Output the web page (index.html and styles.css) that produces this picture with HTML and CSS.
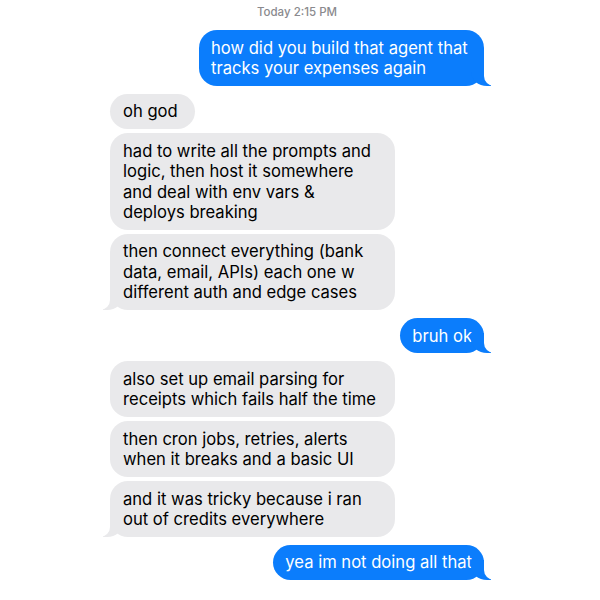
FILE: index.html
```html
<!DOCTYPE html>
<html>
<head>
<meta charset="utf-8">
<link rel="stylesheet" href="styles.css">
</head>
<body>
<div class="chat">
  <div class="stamp">Today 2:15 PM</div>
  <div class="group sent">
    <div class="msg tail">how did you build that agent that tracks your expenses again</div>
  </div>
  <div class="group recv">
    <div class="msg">oh god</div>
    <div class="msg">had to write all the prompts and logic, then host it somewhere and deal with env vars &amp; deploys breaking</div>
    <div class="msg tail">then connect everything (bank data, email, APIs) each one w different auth and edge cases</div>
  </div>
  <div class="group sent">
    <div class="msg tail">bruh ok</div>
  </div>
  <div class="group recv">
    <div class="msg">also set up email parsing for receipts which fails half the time</div>
    <div class="msg">then cron jobs, retries, alerts when it breaks and a basic UI</div>
    <div class="msg tail">and it was tricky because i ran out of credits everywhere</div>
  </div>
  <div class="group sent">
    <div class="msg tail">yea im not doing all that</div>
  </div>
</div>
</body>
</html>
```
FILE: styles.css
```css
html, body {
  margin: 0;
  padding: 0;
  background: #ffffff;
}
body {
  font-family: Inter, "Noto Sans", sans-serif;
}
.chat {
  width: 374px;
  margin-left: 110px;
  padding-top: 5px;
  display: flex;
  flex-direction: column;
  gap: 8px;
}
.stamp {
  text-align: center;
  font-size: 11.5px;
  line-height: 14px;
  color: #8a8a8e;
  font-weight: 500;
  margin-bottom: 3px;
}
.group {
  display: flex;
  flex-direction: column;
  gap: 4px;
}
.group.sent {
  align-items: flex-end;
}
.group.recv {
  align-items: flex-start;
}
.msg {
  position: relative;
  max-width: 285px;
  box-sizing: border-box;
  padding: 7.5px 12px 7.5px 12px;
  border-radius: 18px;
  font-size: 16.6px;
  line-height: 20.4px;
}
.sent .msg {
  background: #0b7dfc;
  color: #ffffff;
}
.recv .msg {
  padding: 7.5px 17px 7.5px 13px;
  background: #e9e9eb;
  color: #000000;
}
.msg.tail::before,
.msg.tail::after {
  content: "";
  position: absolute;
  bottom: 0;
  height: 20px;
}
.sent .msg.tail::before {
  right: -7px;
  width: 20px;
  background: #0b7dfc;
  border-bottom-left-radius: 16px 14px;
}
.sent .msg.tail::after {
  right: -26px;
  width: 26px;
  background: #ffffff;
  border-bottom-left-radius: 10px;
}
.recv .msg.tail::before {
  left: -7px;
  width: 20px;
  background: #e9e9eb;
  border-bottom-right-radius: 16px 14px;
}
.recv .msg.tail::after {
  left: -26px;
  width: 26px;
  background: #ffffff;
  border-bottom-right-radius: 10px;
}
```
